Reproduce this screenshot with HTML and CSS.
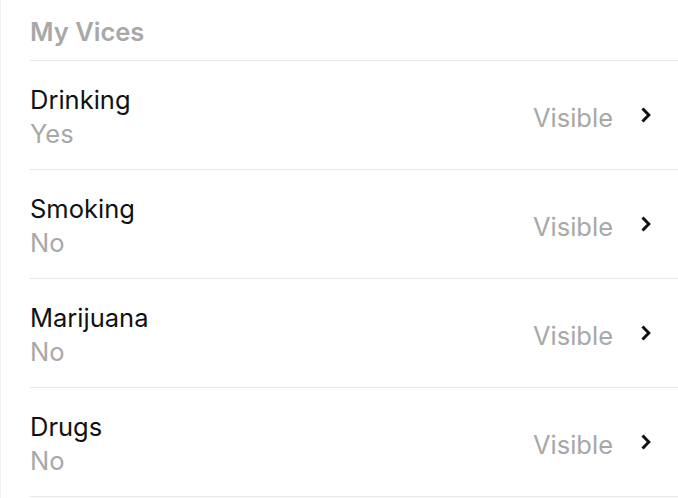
FILE: index.html
```html
<!DOCTYPE html>
<html>
<head>
    <title>My Vices</title>
    <link rel="stylesheet" href="styles.css">
</head>
<body>
    <div class="panel">
        <h2 class="section-title">My Vices</h2>

        <div class="row">
            <div class="row-text">
                <div class="row-label">Drinking</div>
                <div class="row-value">Yes</div>
            </div>
            <span class="row-status">Visible</span>
            <svg class="chevron" width="12" height="18" viewBox="0 0 12 18"><path d="M2.5 2.5 L8.8 9 L2.5 15.5" fill="none" stroke="#111" stroke-width="3"/></svg>
        </div>

        <div class="row">
            <div class="row-text">
                <div class="row-label">Smoking</div>
                <div class="row-value">No</div>
            </div>
            <span class="row-status">Visible</span>
            <svg class="chevron" width="12" height="18" viewBox="0 0 12 18"><path d="M2.5 2.5 L8.8 9 L2.5 15.5" fill="none" stroke="#111" stroke-width="3"/></svg>
        </div>

        <div class="row">
            <div class="row-text">
                <div class="row-label">Marijuana</div>
                <div class="row-value">No</div>
            </div>
            <span class="row-status">Visible</span>
            <svg class="chevron" width="12" height="18" viewBox="0 0 12 18"><path d="M2.5 2.5 L8.8 9 L2.5 15.5" fill="none" stroke="#111" stroke-width="3"/></svg>
        </div>

        <div class="row">
            <div class="row-text">
                <div class="row-label">Drugs</div>
                <div class="row-value">No</div>
            </div>
            <span class="row-status">Visible</span>
            <svg class="chevron" width="12" height="18" viewBox="0 0 12 18"><path d="M2.5 2.5 L8.8 9 L2.5 15.5" fill="none" stroke="#111" stroke-width="3"/></svg>
        </div>
    </div>
</body>
</html>
```

FILE: styles.css
```css
body {
    margin: 0;
    background: #fff;
    font-family: Inter, "Noto Sans", sans-serif;
}
.panel {
    border-left: 1px solid #f0f0f0;
    padding-left: 29px;
    height: 498px;
    box-sizing: border-box;
}
.section-title {
    margin: 0;
    height: 61px;
    box-sizing: border-box;
    padding-top: 16px;
    font-size: 25.5px;
    font-weight: 600;
    color: #a8a8a8;
    border-bottom: 1px solid #e8e8e8;
}
.row {
    display: flex;
    align-items: center;
    height: 109px;
    box-sizing: border-box;
    border-bottom: 1px solid #e8e8e8;
    padding-right: 26px;
}
.row-text {
    flex: 1;
    padding-top: 4px;
    line-height: 34px;
    font-size: 25.5px;
}
.row-label {
    color: #111;
}
.row-value {
    color: #a8a8a8;
}
.row-status {
    font-size: 25.5px;
    color: #a8a8a8;
    margin-right: 27px;
    padding-top: 4px;
}
.chevron {
    display: block;
}
```
